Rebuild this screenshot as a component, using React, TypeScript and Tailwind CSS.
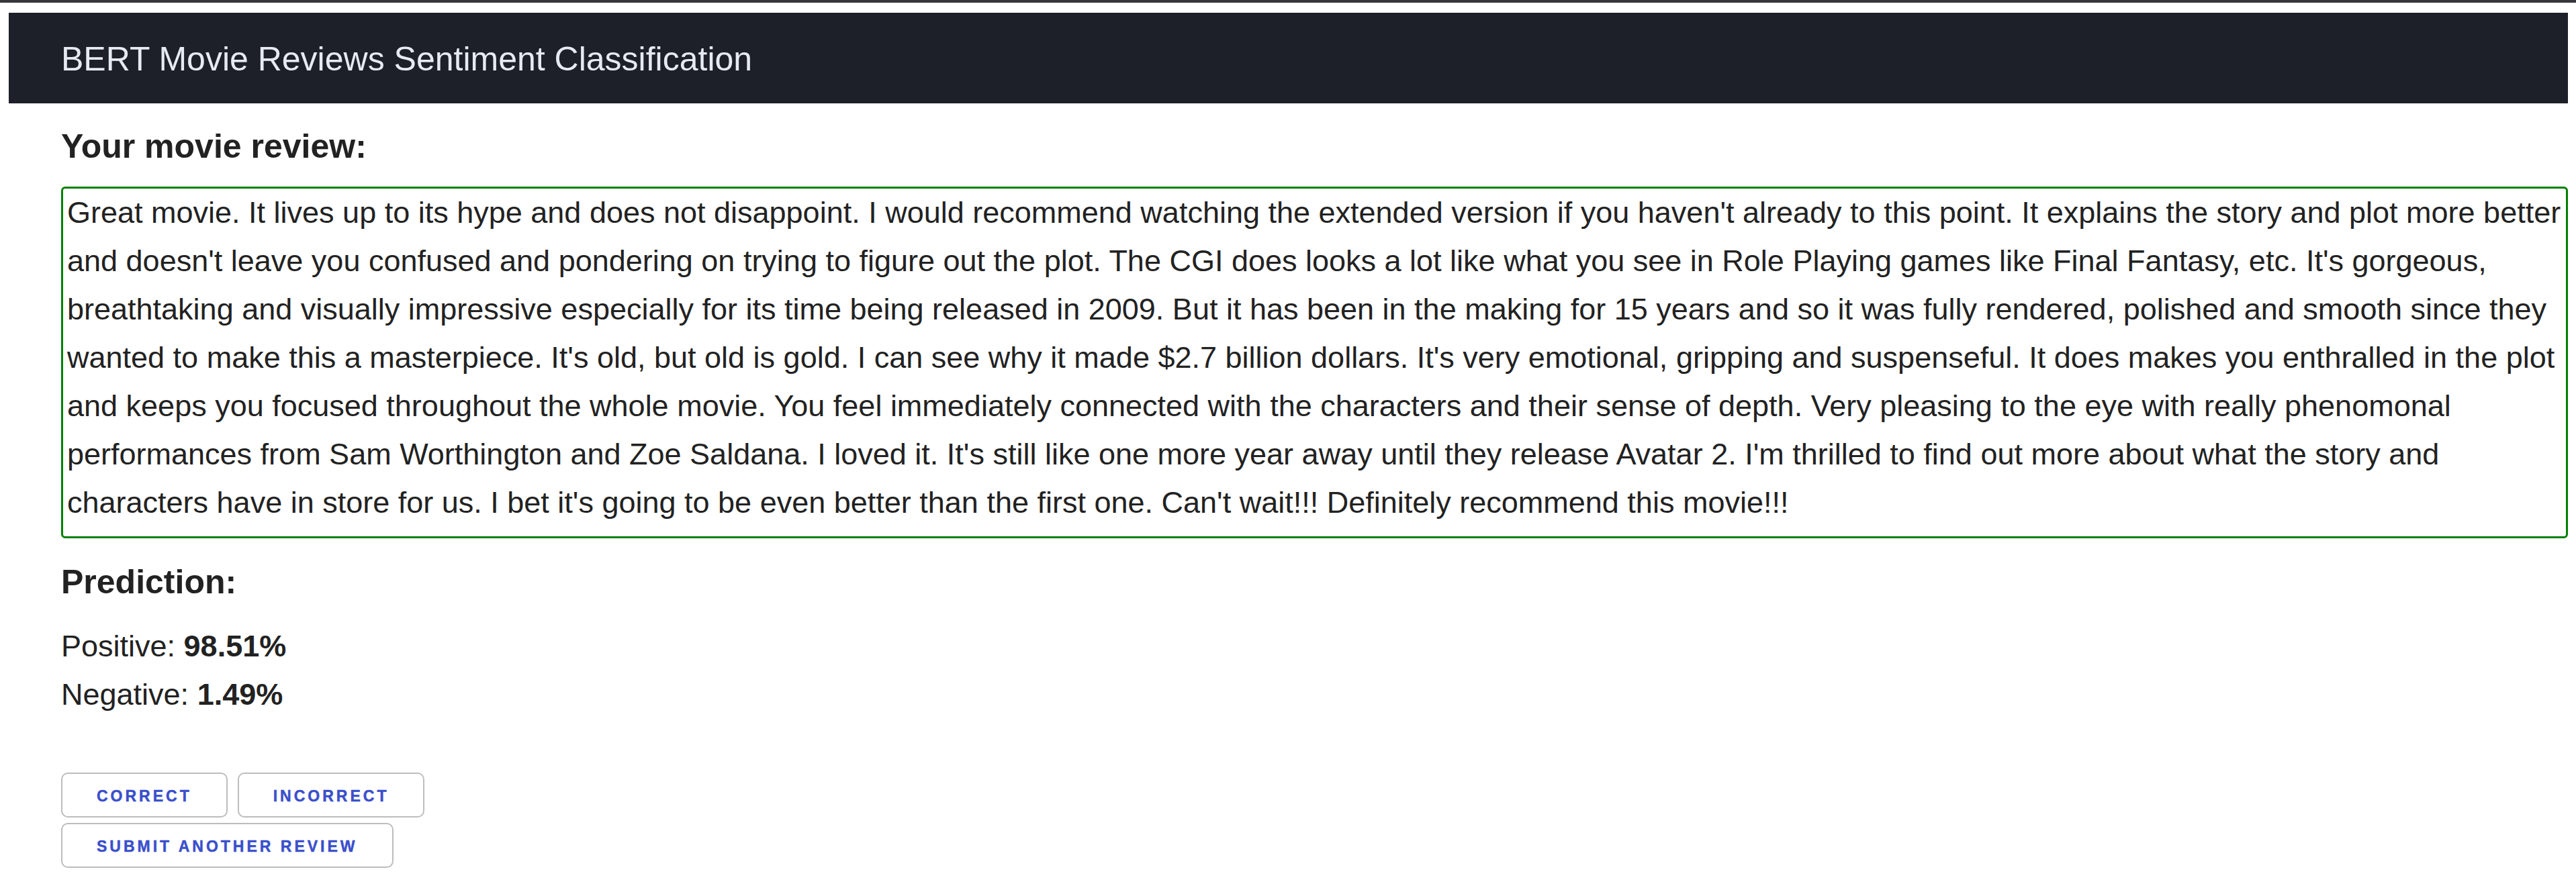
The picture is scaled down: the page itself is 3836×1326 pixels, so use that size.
const review =
  "Great movie. It lives up to its hype and does not disappoint. I would recommend watching the extended version if you haven't already to this point. It explains the story and plot more better and doesn't leave you confused and pondering on trying to figure out the plot. The CGI does looks a lot like what you see in Role Playing games like Final Fantasy, etc. It's gorgeous, breathtaking and visually impressive especially for its time being released in 2009. But it has been in the making for 15 years and so it was fully rendered, polished and smooth since they wanted to make this a masterpiece. It's old, but old is gold. I can see why it made $2.7 billion dollars. It's very emotional, gripping and suspenseful. It does makes you enthralled in the plot and keeps you focused throughout the whole movie. You feel immediately connected with the characters and their sense of depth. Very pleasing to the eye with really phenomonal performances from Sam Worthington and Zoe Saldana. I loved it. It's still like one more year away until they release Avatar 2. I'm thrilled to find out more about what the story and characters have in store for us. I bet it's going to be even better than the first one. Can't wait!!! Definitely recommend this movie!!!";

function FeedbackButton({ label }: { label: string }) {
  return (
    <button
      type="button"
      className="flex h-[67px] items-center justify-center rounded-[10px] border-2 border-[#bdbdbd] bg-white px-[51px] pt-[4px] text-[23px] leading-none font-bold tracking-[4px] text-[#3a4fcc] uppercase [-webkit-text-stroke:0.5px_#3a4fcc]"
    >
      {label}
    </button>
  );
}

export default function App() {
  return (
    <div className="min-h-screen bg-white font-[family-name:Liberation_Sans,Arial,sans-serif] text-[#222]">
      <div className="h-[4px] bg-[#35363a]" />
      <div className="pt-[15px] pr-[12px] pl-[13px]">
        <header className="flex h-[135px] items-center bg-[#1d2029] pt-[2px] pl-[78px]">
          <h1 className="text-[50px] leading-none font-normal text-[#e6eaf3]">
            BERT Movie Reviews Sentiment Classification
          </h1>
        </header>

        <main className="pl-[78px]">
          <h2 className="mt-[34px] text-[50px] leading-[60px] font-bold">Your movie review:</h2>
          <div className="mt-[30px] rounded-[6px] border-[3px] border-[#008000] pt-0 pr-[2px] pb-[14px] pl-[6px] text-[45px] leading-[72px]">
            {review}
          </div>

          <h2 className="mt-[35px] text-[50px] leading-[60px] font-bold">Prediction:</h2>
          <div className="mt-[30px] text-[45px] leading-[72px]">
            <p>
              Positive: <b>98.51%</b>
            </p>
            <p>
              Negative: <b>1.49%</b>
            </p>
          </div>

          <div className="mt-[80px] flex flex-col items-start gap-[8px]">
            <div className="flex gap-[15px]">
              <FeedbackButton label="Correct" />
              <FeedbackButton label="Incorrect" />
            </div>
            <FeedbackButton label="Submit another review" />
          </div>
        </main>
      </div>
    </div>
  );
}
